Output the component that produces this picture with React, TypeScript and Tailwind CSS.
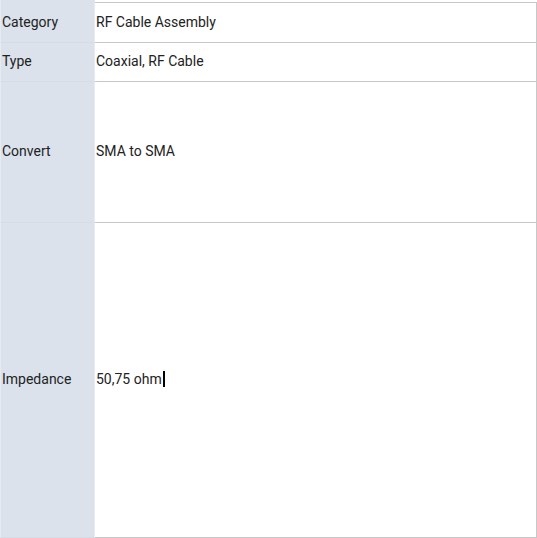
const rows = [
  { label: 'Category', value: 'RF Cable Assembly', h: 'h-[41px]', first: true },
  { label: 'Type', value: 'Coaxial, RF Cable', h: 'h-[39px]' },
  { label: 'Convert', value: 'SMA to SMA', h: 'h-[141px]' },
  { label: 'Impedance', value: '50,75 ohm', h: 'h-[315px]', caret: true },
]

export default function App() {
  return (
    <div className="w-[537px] h-[538px] bg-white font-['Roboto',sans-serif] text-[14px] text-[#222]">
      <div className="flex h-[2px]">
        <div className="w-[95px] bg-[#dbe2ec] border-l border-[#e6eaf1]"></div>
        <div className="flex-1"></div>
      </div>
      {rows.map(r => (
        <div key={r.label} className={`flex ${r.h}`}>
          <div className={`w-[95px] shrink-0 bg-[#dbe2ec] border-l border-r border-[#e6eaf1] border-b-[#d6dce5] border-b flex items-center pl-[1px] ${r.first ? '' : 'pb-[2px]'}`}>
            {r.label}
          </div>
          <div className={`flex-1 border-r border-b border-[#c8c8c8] flex items-center pl-[1px] ${r.first ? 'border-t' : 'pb-[2px]'}`}>
            <span>{r.value}</span>
            {r.caret && <span className="inline-block w-[2px] h-[16px] bg-black ml-[1px]"></span>}
          </div>
        </div>
      ))}
    </div>
  )
}
